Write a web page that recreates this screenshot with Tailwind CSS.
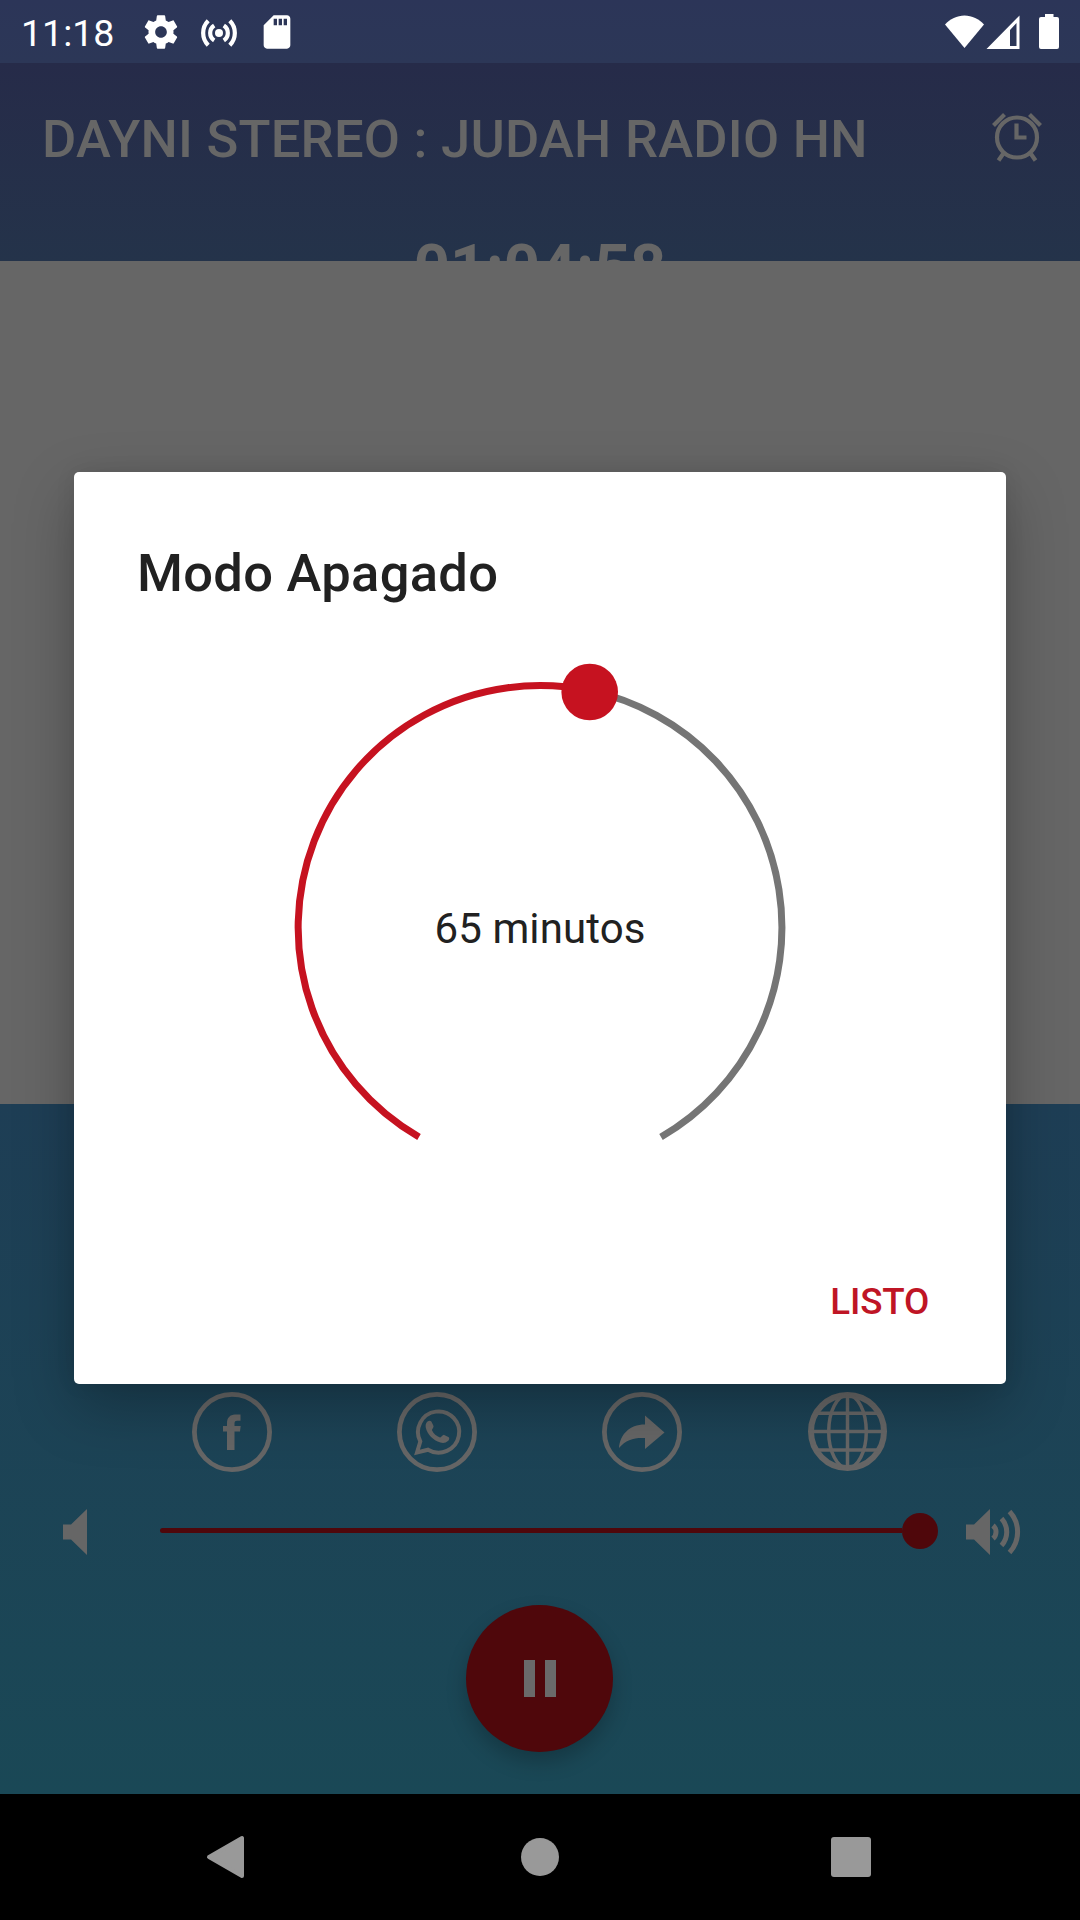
<!DOCTYPE html>
<html lang="es">
<head>
    <meta charset="UTF-8">
    <meta name="viewport" content="width=device-width, initial-scale=1.0">
    <title>Dayni Stereo | Modo Apagado</title>
    <script src="https://cdn.jsdelivr.net/npm/@tailwindcss/browser@4"></script>
</head>
<body class="bg-black font-[Roboto,sans-serif]">
    <div class="relative w-[1080px] h-[1920px] overflow-hidden flex flex-col">

        <!-- Status bar -->
        <div class="h-[63px] shrink-0 bg-linear-to-b from-[#2c3558] to-[#2c3757] text-white flex items-center pl-[21px] pr-[21px]">
            <span class="text-[37.5px] leading-[44px] w-[94px] whitespace-nowrap mt-[3px]">11:18</span>
            <svg class="w-[40px] h-[40px] ml-[26px]" viewBox="0 0 24 24" fill="currentColor">
                <path d="M19.43 12.98c.04-.32.07-.64.07-.98s-.03-.66-.07-.98l2.11-1.65c.19-.15.24-.42.12-.64l-2-3.46c-.12-.22-.39-.3-.61-.22l-2.49 1c-.52-.4-1.08-.73-1.69-.98l-.38-2.65C14.46 2.18 14.25 2 14 2h-4c-.25 0-.46.18-.49.42l-.38 2.65c-.61.25-1.17.59-1.69.98l-2.49-1c-.23-.09-.49 0-.61.22l-2 3.46c-.13.22-.07.49.12.64l2.11 1.65c-.04.32-.07.65-.07.98s.03.66.07.98l-2.11 1.65c-.19.15-.24.42-.12.64l2 3.46c.12.22.39.3.61.22l2.49-1c.52.4 1.08.73 1.69.98l.38 2.65c.03.24.24.42.49.42h4c.25 0 .46-.18.49-.42l.38-2.65c.61-.25 1.17-.59 1.69-.98l2.49 1c.23.09.49 0 .61-.22l2-3.46c.12-.22.07-.49-.12-.64l-2.11-1.65zM12 15.5c-1.93 0-3.5-1.57-3.5-3.5s1.57-3.5 3.5-3.5 3.5 1.57 3.5 3.5-1.57 3.5-3.5 3.5z"/>
            </svg>
            <svg class="w-[36px] h-[28px] ml-[20px] mt-[2px]" viewBox="0 0 36 28" fill="none" stroke="currentColor" stroke-width="4.2">
                <circle cx="18" cy="14" r="4" fill="currentColor" stroke="none"/>
                <path d="M13.2 6.5a9 9 0 0 0 0 15M22.8 6.5a9 9 0 0 1 0 15M7.2 1.8a17.3 17.3 0 0 0 0 24.4M28.8 1.8a17.3 17.3 0 0 1 0 24.4"/>
            </svg>
            <svg class="w-[40px] h-[40px] ml-[20px]" viewBox="0 0 24 24" fill="currentColor">
                <path d="M18 2h-8L4 8v12c0 1.100.9 2 2 2h12c1.100 0 2-.9 2-2V4c0-1.100-.9-2-2-2zm-6 6h-2V4h2v4zm3 0h-2V4h2v4zm3 0h-2V4h2v4z"/>
            </svg>
            <div class="grow"></div>
            <svg class="w-[39px] h-[34px]" viewBox="0 0 39 34" fill="currentColor">
                <path d="M0 9.500C5 4 12 .5 19.500.5S34 4 39 9.500L19.500 33z"/>
            </svg>
            <svg class="w-[34px] h-[34px] ml-[2px]" viewBox="0 0 34 34" fill="currentColor">
                <path fill-rule="evenodd" d="M33.500.5V34H.5zM24 15v16h6.500V8z"/>
            </svg>
            <svg class="w-[20px] h-[35px] ml-[19px]" viewBox="0 0 20 35" fill="currentColor">
                <path d="M6 0h8.500v3H18a2 2 0 0 1 2 2v28a2 2 0 0 1-2 2H2a2 2 0 0 1-2-2V5a2 2 0 0 1 2-2h4z"/>
            </svg>
        </div>

        <!-- Header -->
        <header class="h-[198px] shrink-0 overflow-hidden bg-linear-to-b from-[#262b49] to-[#24334a] text-[#666]">
            <div class="h-[147px] flex items-center justify-between pl-[42px] pr-[37px]">
                <h1 class="text-[52.5px] leading-[62px] font-medium whitespace-nowrap tracking-[0.26px] mt-[5px]">DAYNI STEREO : JUDAH RADIO HN</h1>
                <svg class="w-[52px] h-[52px]" viewBox="0 0 52 52" fill="none" stroke="currentColor" stroke-width="4.200">
                    <circle cx="26" cy="26.500" r="20"/>
                    <path d="M25.500 12.500V26.500H35.500M2.500 14.500L13.500 3.500M38.500 3.500L49.500 14.500M12 43L7.500 49.500M40 43L44.500 49.500"/>
                </svg>
            </div>
            <div class="text-center text-[63px] leading-[74px] font-bold mt-[21px]">01:04:58</div>
        </header>

        <!-- Artwork area -->
        <div class="h-[843px] shrink-0 bg-[#666]"></div>

        <!-- Player -->
        <section class="h-[690px] shrink-0 bg-linear-to-b from-[#1e3e55] to-[#1a4856] text-[#666] pt-[288px]">
            <div class="flex justify-center gap-[125px] h-[80px] pr-[2px]">
                <svg class="w-[80px] h-[80px]" viewBox="0 0 80 80" fill="none" stroke="currentColor">
                    <circle cx="40" cy="40" r="37.600" stroke-width="4.800"/>
                    <path fill="currentColor" stroke="none" d="M35 58V39.500h-4V34h4v-3c0-5 3-8.500 8-8.500h5.500v6.300H45c-1.500 0-2.500.8-2.500 2.500V34h6.200l-.7 5.500h-5.500V58z"/>
                </svg>
                <svg class="w-[80px] h-[80px]" viewBox="0 0 80 80" fill="none" stroke="currentColor">
                    <circle cx="40" cy="40" r="37.600" stroke-width="4.800"/>
                    <path stroke-width="4" d="M20 60.500L23.300 49.500A20.600 20.600 0 1 1 31 57.700Z"/>
                    <path fill="currentColor" stroke="none" d="M30.500 29.500c1.300-1.200 3.200-1.200 4 .3l2 4.200c.5 1.300-1.700 3.200-1.500 4.200 1.500 3.500 4.500 6 8 7.200 1.300.2 2.700-2.900 4.200-2.500l4.200 2c1.500.8.8 3-.5 4.200-2 2-5 2.300-7.500 1.500-7.500-2.400-13-8-14.600-14.800-.5-2.300 0-4.800 1.700-6.300z"/>
                </svg>
                <svg class="w-[80px] h-[80px]" viewBox="0 0 80 80" fill="none" stroke="currentColor">
                    <circle cx="40" cy="40" r="37.600" stroke-width="4.800"/>
                    <path fill="currentColor" stroke="none" d="M43 23.500L62.500 40.500 43 57V46c-11-.5-19 1.500-26 10 1-13 10-23.500 26-23.500z"/>
                </svg>
                <svg class="w-[80px] h-[80px]" viewBox="0 0 80 80" fill="none" stroke="currentColor">
                    <circle cx="40.500" cy="39.500" r="36.500" stroke-width="6"/>
                    <ellipse cx="40.500" cy="39.500" rx="18.800" ry="36.500" stroke-width="3.500"/>
                    <path stroke-width="3.500" d="M40.500 3v73M4 39.500h73M10 21.300h61M10 58h61"/>
                </svg>
            </div>

            <!-- Volume -->
            <div class="flex items-center mt-[31px] h-[56px] pl-[63px]">
                <svg class="w-[24px] h-[46px] mt-[2px]" viewBox="0 0 24 46" fill="currentColor">
                    <path d="M0 15.500h8L24 0v46L8 30.500H0z"/>
                </svg>
                <div class="ml-[73px] w-[778px] h-[36px] flex items-center -mt-px">
                    <div class="grow h-[5px] rounded-l-full bg-[#4f070b]"></div>
                    <div class="w-[36px] h-[36px] rounded-full bg-[#4f070b]"></div>
                </div>
                <svg class="ml-[28px] mt-[2px] w-[56px] h-[46px]" viewBox="0 0 56 46" fill="currentColor">
                    <path d="M0 15.500h8L24 0v46L8 30.500H0z"/>
                    <path fill="none" stroke="currentColor" stroke-width="5" d="M27 16.500a8.500 8.500 0 0 1 0 13M35.500 9.500a20 20 0 0 1 0 27M43.500 2.500a30 30 0 0 1 0 41"/>
                </svg>
            </div>

            <!-- Pause -->
            <div class="flex justify-center mt-[46px] pr-[1px]">
                <div class="w-[147px] h-[147px] rounded-full bg-[#4f070b] shadow-[0_10px_20px_rgba(0,0,0,0.22)] flex items-center justify-center gap-[10px]">
                    <div class="w-[11px] h-[37px] bg-[#6a6a6a]"></div>
                    <div class="w-[11px] h-[37px] bg-[#6a6a6a]"></div>
                </div>
            </div>
        </section>

        <!-- Navigation bar -->
        <nav class="h-[126px] shrink-0 bg-black flex items-center justify-between pl-[206px] pr-[209px] text-[#999]">
            <svg class="w-[39px] h-[44px]" viewBox="0 0 39 44" fill="currentColor" stroke="currentColor" stroke-width="4" stroke-linejoin="round">
                <path d="M3 22L36 3v38z"/>
            </svg>
            <div class="w-[38px] h-[38px] rounded-full bg-[#999] ml-[4px]"></div>
            <div class="w-[40px] h-[40px] rounded-[3px] bg-[#999]"></div>
        </nav>

        <!-- Dialog -->
        <div class="absolute left-[74px] top-[472px] w-[932px] h-[912px] bg-white rounded-[5px] shadow-[0_22px_60px_rgba(0,0,0,0.26),0_0_20px_rgba(0,0,0,0.08)] text-[#212121] flex flex-col">
            <h2 class="text-[52.5px] leading-[62px] font-medium tracking-[0.3px] pl-[63px] pt-[70px]">Modo Apagado</h2>
            <div class="grid place-items-center mt-[54px]">
                <svg class="col-start-1 row-start-1 w-[500px] h-[500px]" viewBox="290 658 500 500" fill="none" stroke-width="7">
                    <path stroke="#757575" d="M590 690.700A242 242 0 0 1 661 1137"/>
                    <path stroke="#c61220" d="M419 1137A242 242 0 0 1 590 690.700"/>
                    <circle cx="589.700" cy="692" r="28.300" fill="#c61220"/>
                </svg>
                <span class="col-start-1 row-start-1 text-[42px] leading-[50px] tracking-[0.1px] mt-[42px]">65 minutos</span>
            </div>
            <div class="flex justify-end pr-[77px] mt-[122px]">
                <button class="text-[36.75px] leading-[44px] font-medium tracking-[-0.2px] text-[#bf1525]">LISTO</button>
            </div>
        </div>
    </div>
</body>
</html>
